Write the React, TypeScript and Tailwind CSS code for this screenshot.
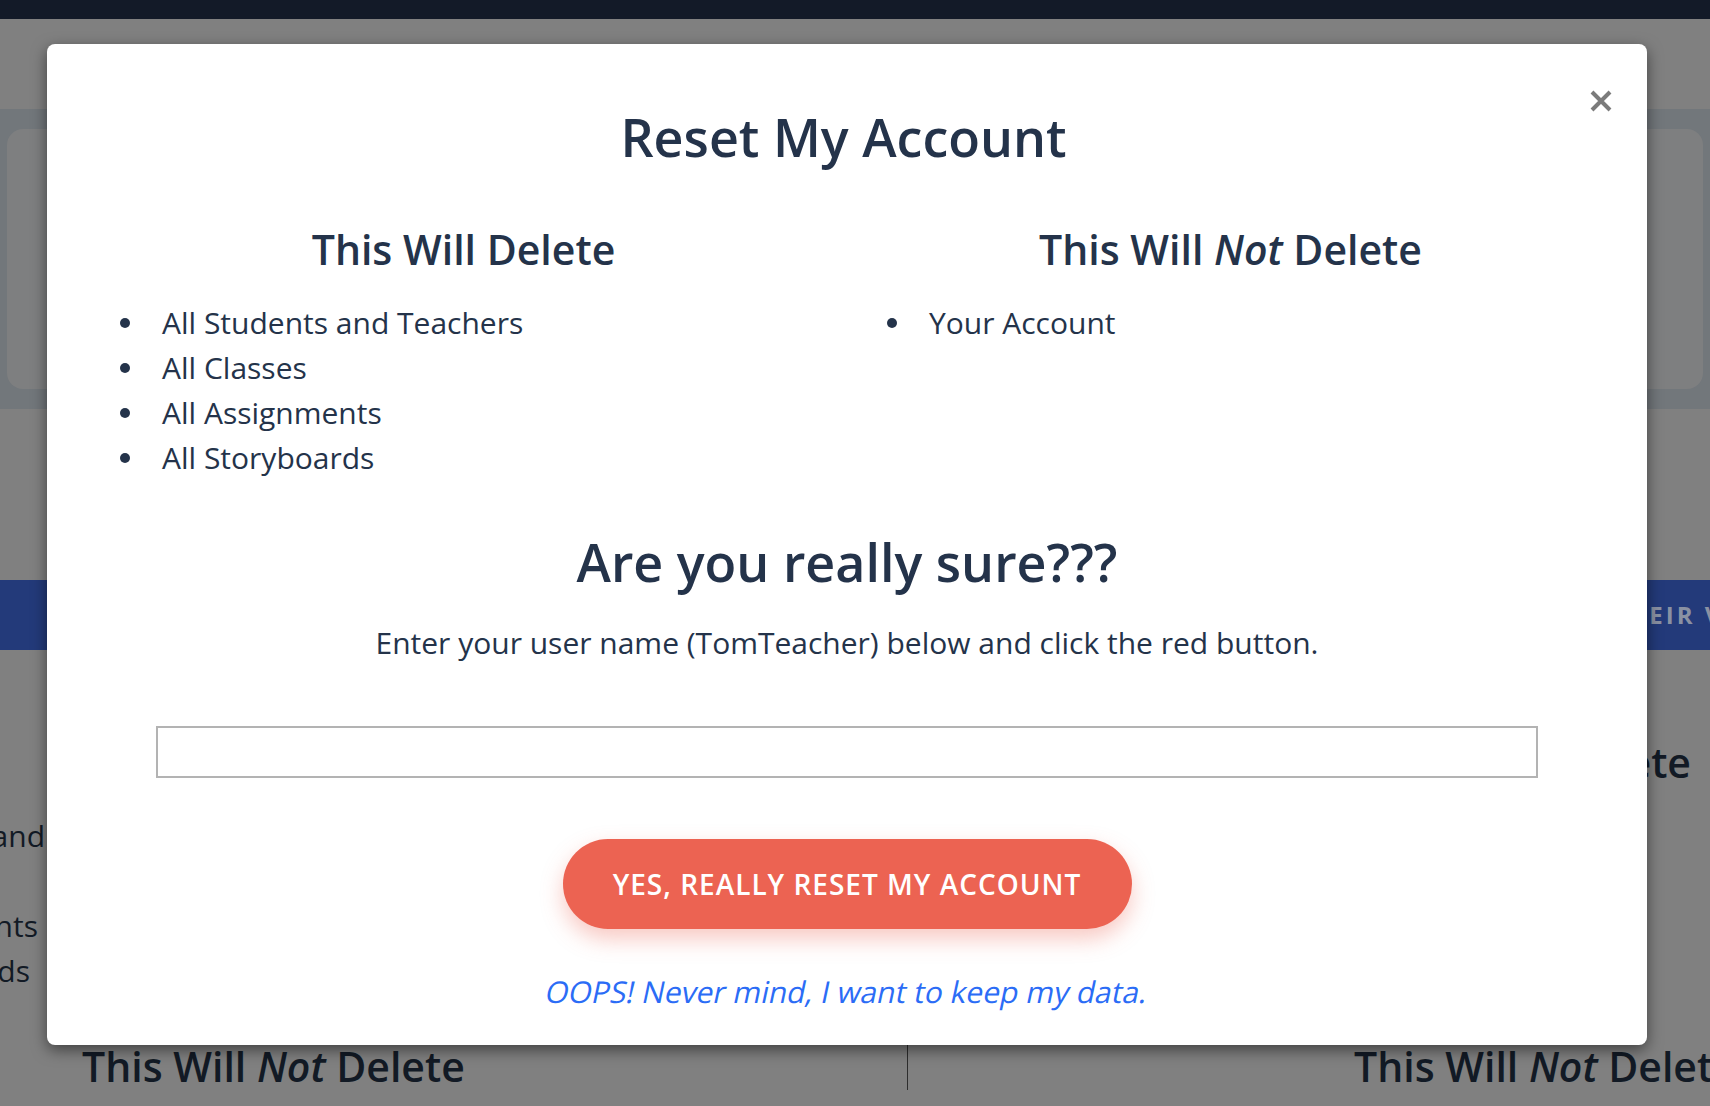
const deleteItems = [
  "All Students and Teachers",
  "All Classes",
  "All Assignments",
  "All Storyboards",
];

const keepItems = ["Your Account"];

const BulletList = ({ items }: { items: string[] }) => (
  <ul className="mt-[27px] text-[30px] leading-[45px]">
    {items.map((item) => (
      <li key={item} className="flex items-center">
        <span className="ml-[40px] mr-[32px] h-[10px] w-[10px] shrink-0 rounded-full bg-[#24334a]" />
        {item}
      </li>
    ))}
  </ul>
);

const PageBehind = () => {
  return (
    <div className="h-[1106px] w-full overflow-hidden bg-[#808080] font-['Open_Sans',sans-serif] text-[#121a25]">
      <div className="h-[19px] bg-[#131a28]" />
      <div className="h-[90px]" />
      <div className="h-[300px] bg-[#72777b] px-[7px] py-[20px]">
        <div className="h-full rounded-[16px] bg-[#7e7f80]" />
      </div>
      <div className="h-[171px]" />
      <div className="h-[70px] bg-[#233a7a] pl-[1611px] text-[24px] font-bold leading-[70px] tracking-[3px] whitespace-nowrap text-[#8a91a3]">
        THEIR VIEW
      </div>
      <div className="grid grid-cols-[907px_minmax(0,1fr)]">
        <div className="pt-[163px]">
          <div className="text-[30px] leading-[45px]">
            <div className="flex w-[45px] justify-end whitespace-nowrap">
              All Students and
            </div>
            <div className="h-[45px]" />
            <div className="flex w-[38px] justify-end whitespace-nowrap">
              All Assignments
            </div>
            <div className="flex w-[30px] justify-end whitespace-nowrap">
              All Storyboards
            </div>
          </div>
          <h3 className="mt-[49px] pl-[82px] text-[41px] font-semibold leading-[48px] whitespace-nowrap">
            This Will <em>Not</em> Delete
          </h3>
        </div>
        <div className="min-w-0 border-l border-[#2d2d2d] pt-[88px]">
          <h3 className="pr-[19px] text-right text-[41px] font-semibold leading-[48px] whitespace-nowrap">
            This Will Delete
          </h3>
          <h3 className="mt-[256px] pl-[446px] text-[41px] font-semibold leading-[48px] whitespace-nowrap">
            This Will <em>Not</em> Delete
          </h3>
        </div>
      </div>
    </div>
  );
};

const ResetModal = () => {
  return (
    <div className="absolute left-[47px] top-[44px] w-[1600px] rounded-[8px] bg-white px-[33px] pt-[61px] pb-[33px] font-['Open_Sans',sans-serif] text-[#24334a] shadow-[0_5px_15px_rgba(0,0,0,0.5)]">
      <button className="absolute right-[34px] top-[45px] h-[24px] w-[24px] text-[#7b7b7b]">
        <svg viewBox="0 0 24 24" className="h-[24px] w-[24px]">
          <path
            d="M3 3 L21 21 M21 3 L3 21"
            stroke="currentColor"
            strokeWidth="4"
            strokeLinecap="butt"
          />
        </svg>
      </button>

      <h1 className="pr-[7px] text-center text-[52px] font-semibold leading-[64px]">
        Reset My Account
      </h1>

      <div className="mt-[56px] grid grid-cols-2">
        <div>
          <h2 className="text-center text-[41px] font-semibold leading-[48px]">
            This Will Delete
          </h2>
          <BulletList items={deleteItems} />
        </div>
        <div>
          <h2 className="text-center text-[41px] font-semibold leading-[48px]">
            This Will <em>Not</em> Delete
          </h2>
          <BulletList items={keepItems} />
        </div>
      </div>

      <h2 className="mt-[51px] text-center text-[52px] font-semibold leading-[62px]">
        Are you really sure???
      </h2>
      <p className="mt-[30px] text-center text-[30px] leading-[40px]">
        Enter your user name (TomTeacher) below and click the red button.
      </p>

      <div className="mt-[63px] px-[76px]">
        <input
          type="text"
          className="block h-[52px] w-full border-2 border-[#b3b3b3] bg-white px-3 text-[24px] outline-none"
        />
      </div>

      <div className="mt-[61px] flex justify-center">
        <button className="h-[90px] w-[569px] rounded-full bg-[#ec6352] text-[28px] font-semibold tracking-[1px] text-white shadow-[0_10px_22px_rgba(236,99,82,0.35)]">
          YES, REALLY RESET MY ACCOUNT
        </button>
      </div>

      <p className="mt-[43px] text-center text-[30px] leading-[40px] text-[#2b6cf6]">
        <span className="inline-block -skew-x-[12deg]">
          OOPS! Never mind, I want to keep my data.
        </span>
      </p>
    </div>
  );
};

export default function App() {
  return (
    <div className="relative h-[1106px] w-full overflow-hidden">
      <PageBehind />
      <ResetModal />
    </div>
  );
}
